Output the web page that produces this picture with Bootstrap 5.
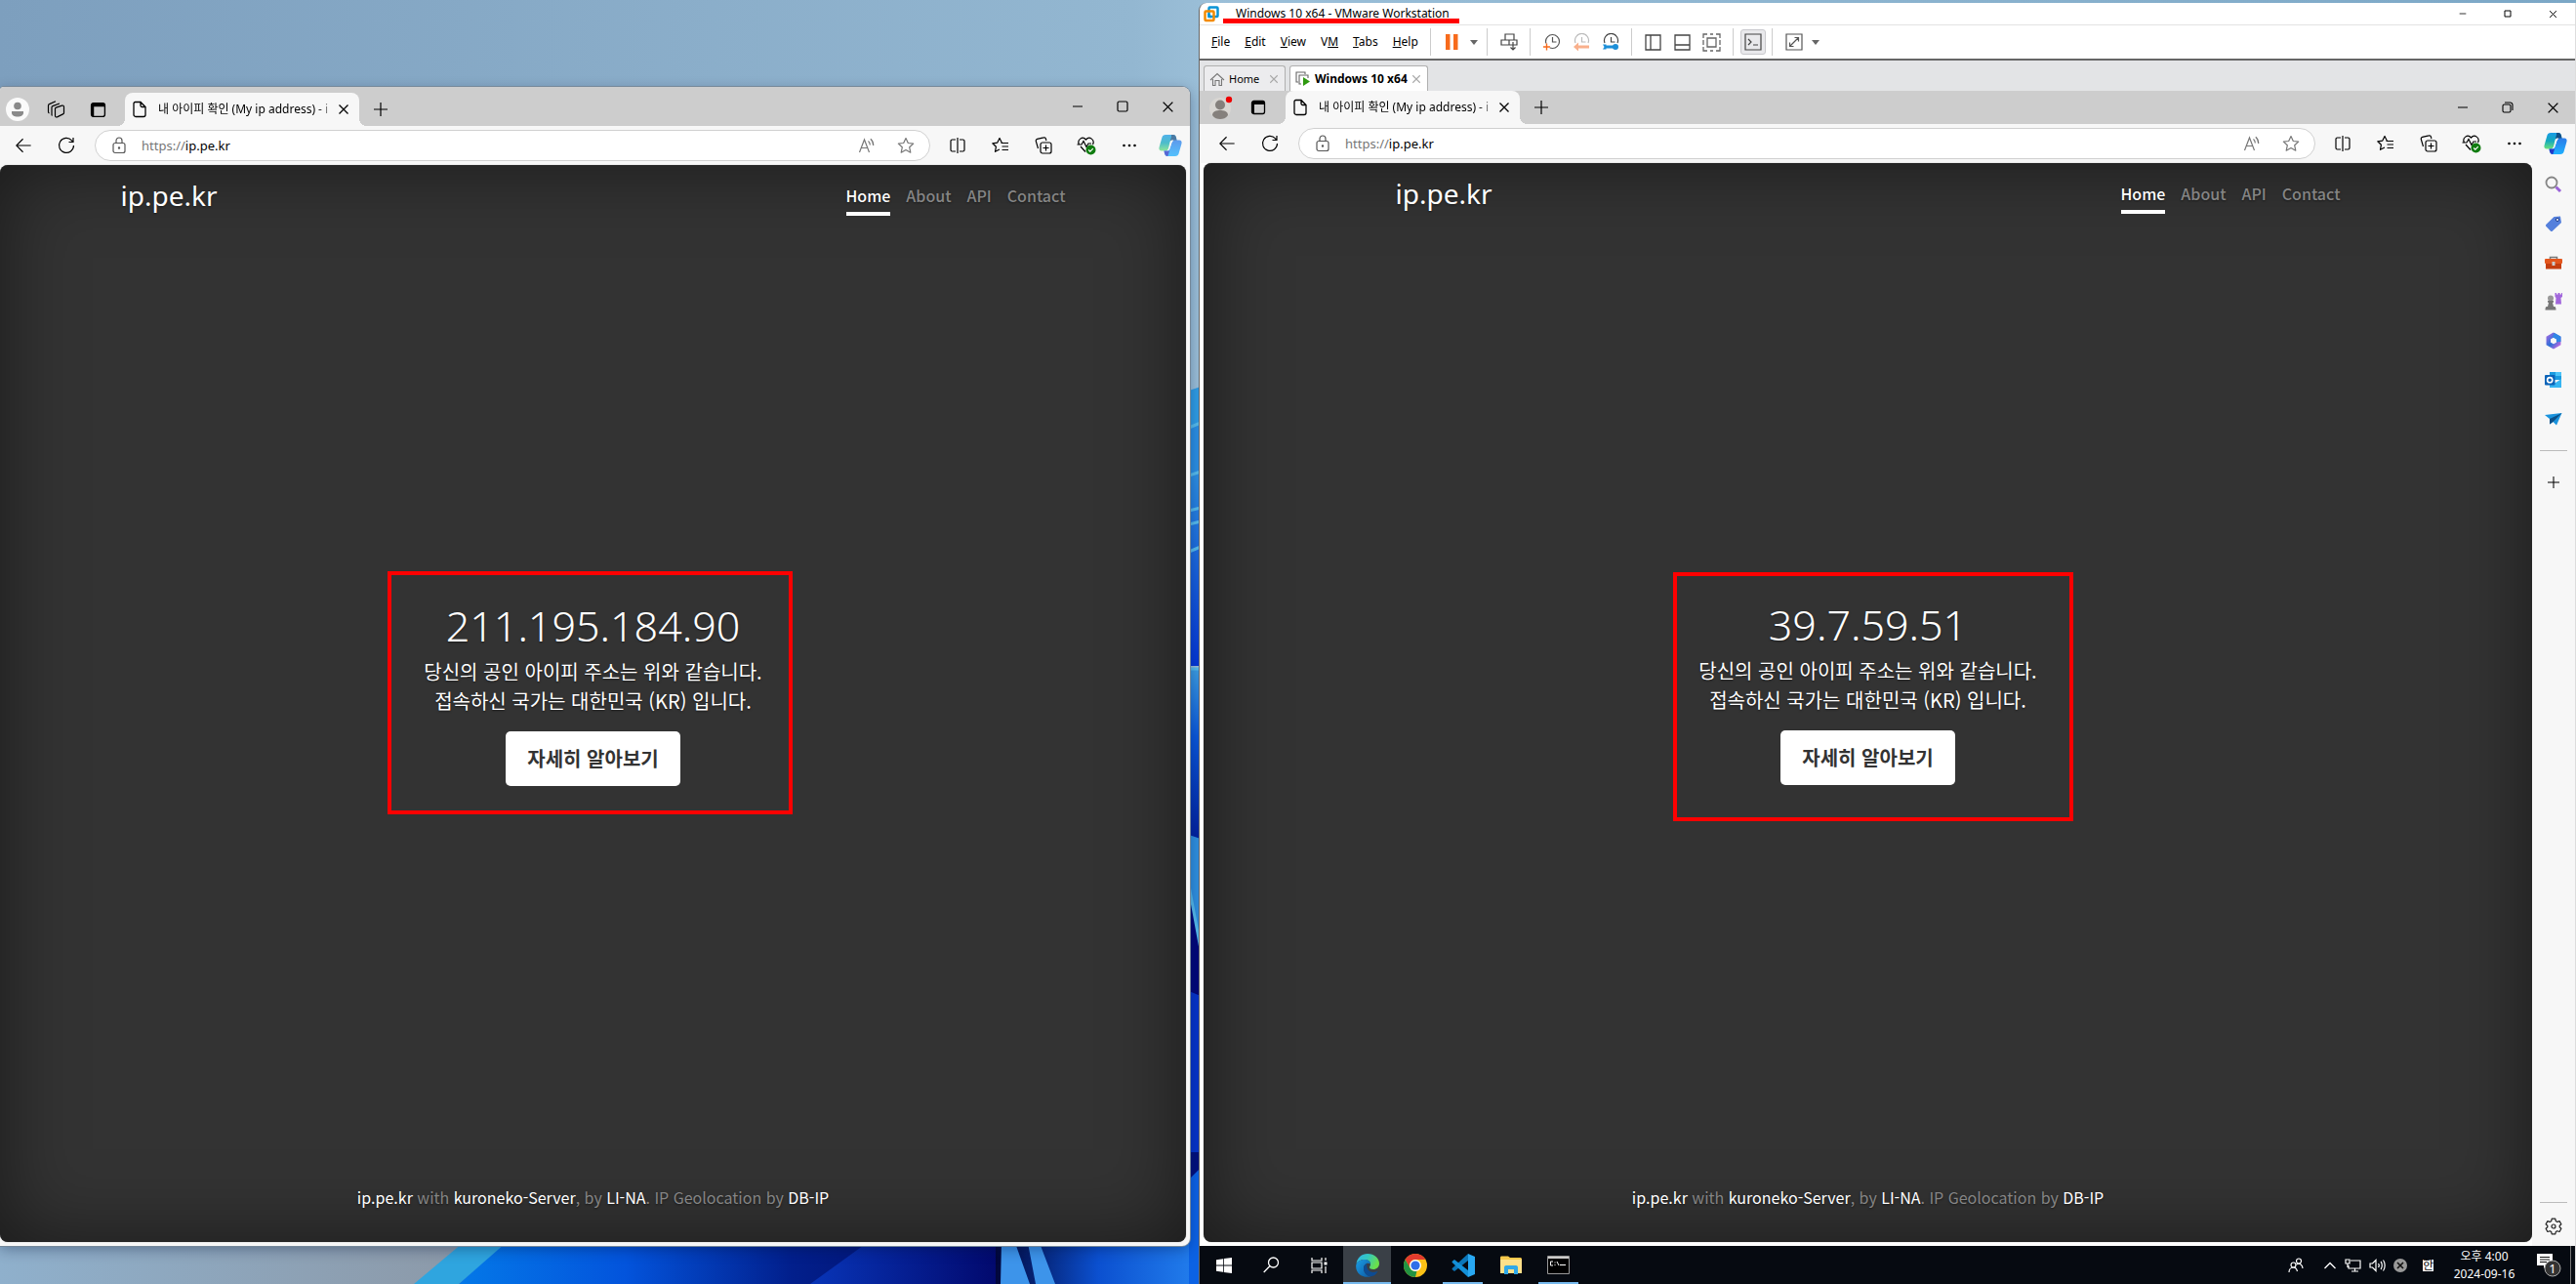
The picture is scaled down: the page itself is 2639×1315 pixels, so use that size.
<!DOCTYPE html>
<html lang="ko">
<head>
<meta charset="utf-8">
<meta name="viewport" content="width=device-width, initial-scale=1">
<title>Desktop</title>
<link href="https://cdn.jsdelivr.net/npm/bootstrap@5.3.0/dist/css/bootstrap.min.css" rel="stylesheet">
<style>
body{font-family:"Noto Sans","Noto Sans CJK KR",sans-serif;font-size:12px;line-height:16px;color:#000;background:#8fb0cb}
button{font:inherit;color:inherit;border:0;background:none;padding:0}
svg{display:block;flex:none}
.desk{height:100vh;min-height:600px;position:relative;overflow:hidden}
.wallpaper{position:absolute;inset:0;width:100%;height:100%}
.pane-left{flex:1219 1 0;min-width:0;padding-top:89px;padding-bottom:39px;position:relative}
.pane-right{flex:1411 1 0;min-width:0;margin-left:9px;padding-top:3px;position:relative}
.win{background:#f7f7f7;overflow:hidden}
.win-host{border-radius:4px 8px 8px 0;box-shadow:0 0 0 1px #76899a,0 4px 14px rgba(0,20,60,.35)}
.win-vm{background:#fff;border-left:1px solid #666;border-right:1px solid #ddd;border-top-left-radius:8px}
.strip{background:#cdcdcd;height:34px}
.strip-tall{height:40px}
.strip-tall .tabs{padding-top:6px}
.ib{display:flex;align-items:center;justify-content:center;width:44px;height:100%;flex:none}
.ib-36{width:36px}.ib-40{width:40px}.ib-46{width:46px}.ib-30{width:30px}.ib-32{width:32px}.ib-14{width:14px}
.page-tab{width:240px;height:34px;background:#f7f7f7;border-radius:8px 8px 0 0;position:relative;padding:0 10px 0 7px;margin-left:8px}
.page-tab::before,.page-tab::after{content:"";position:absolute;bottom:0;width:8px;height:8px}
.page-tab::before{left:-8px;background:radial-gradient(circle at 0 0,transparent 8px,#f7f7f7 8px)}
.page-tab::after{right:-8px;background:radial-gradient(circle at 100% 0,transparent 8px,#f7f7f7 8px)}
.page-tab-vm{margin-left:12px}
.tab-label{flex:1;white-space:nowrap;margin-left:11px;-webkit-mask-image:linear-gradient(90deg,#000 88%,transparent);mask-image:linear-gradient(90deg,#000 88%,transparent)}
.tools{height:40px;background:#f7f7f7;padding-left:2px}
.tools-vm{padding-left:6px}
.addr{height:32px;border:1px solid #d0d0d0;border-radius:16px;background:#fff;margin:0 6px 0 7px;padding:0 4px 0 14px;font-size:13px;color:#767676;min-width:0}
.addr input{border:0;padding:0;outline:0;flex:1;min-width:0;background:none;color:#000}
.addr label{margin-left:13px}
.dark{background:#333;color:#fff;border-radius:8px;box-shadow:0 0 1px #888;font-family:"Noto Sans CJK KR","Noto Sans",sans-serif;overflow:hidden;font-size:16px;line-height:24px;text-shadow:0 1px 2px rgba(0,0,0,.5)}
.dark-in{box-shadow:inset 0 0 80px rgba(0,0,0,.5)}
.cover{width:100%;max-width:1000px}
.brand{font-family:"Noto Sans",sans-serif;font-size:28px;line-height:30px}
.topnav a{color:#858585;font-weight:500;text-decoration:none;padding:3px 0 5px;border-bottom:4px solid transparent}
.topnav a.on{color:#fff;border-color:#fff}
.ip{font-family:"Noto Sans","Noto Sans CJK KR",sans-serif;font-weight:300;font-size:43px;line-height:52px;margin:0 0 6px}
.say{font-size:20px;line-height:30px;margin:0}
.more{display:inline-block;background:#fff;color:#333;font-weight:700;font-size:20px;line-height:30px;padding:13px 22px;border-radius:5px;text-decoration:none;text-shadow:none;margin-top:16px}
.redbox{position:absolute;border:4px solid #f00;pointer-events:none}
.redbox-a{inset:-30px -14px -29px -21px}
.redbox-b{inset:-28px -20px -37px -10px}
.hero{width:380px;position:relative}
.foot{color:#858585;padding-bottom:18px}
.foot a{color:#fff;text-decoration:none}
.vm-title{height:23px;border-bottom:1px solid #e3e3e3}
.vm-title .name{margin-left:17px;position:relative}
.redline{position:absolute;left:-13px;right:-10px;top:13px;height:5px;background:#f00}
.vm-menu{height:34px;padding-left:12px}
.vm-menu .words{gap:15px;margin-right:12px}
.vm-sep{width:1px;height:28px;background:#ccc;margin:0 7px 0 6px}
.words + .vm-sep{margin-left:0}
.pressed{width:26px;height:26px;background:#e9e9ec;border:1px solid #c9c9cd;border-radius:3px}
.vm-tabs{height:33px;background:#e3e4e6;border-top:2px solid #666;padding:5px 0 0 4px;gap:4px}
.vm-tab{height:27px;border:1px solid #b0b0b0;border-bottom:0;border-radius:3px 3px 0 0;background:#ececee;width:84px;padding:0 6px 0 5px;font-size:11px}
.vm-tab-on{width:142px;font-size:12px;background:#fff}
.x-dim{color:#a8a8a8}
.side{width:44px;background:#f7f7f7;padding-top:2px}
.side button{width:100%;height:40px;display:flex;align-items:center;justify-content:center}
.side hr{width:28px;margin:12px auto;border:0;height:1px;background:#bbb;opacity:1}
.taskbar{height:39px;background:#060a11;color:#fff}
.task{width:49px;height:39px;display:flex;align-items:center;justify-content:center;position:relative}
.task.open::after{content:"";position:absolute;left:4px;right:4px;bottom:0;height:2px;background:#76b9ed}
.task.now{background:#3a4047}
.task.now::after{left:0;right:0}
.clock{width:88px;text-align:center;line-height:18px;font-size:12px}
.showdesk{width:5px;height:39px;border-left:1px solid #777}
</style>
</head>
<body>
<svg width="0" height="0" class="position-absolute">
<defs>
<linearGradient id="cg1" x1="0" y1="0" x2="0" y2="1"><stop offset="0" stop-color="#1a9be6"/><stop offset=".5" stop-color="#14a9bd"/><stop offset="1" stop-color="#6be07c"/></linearGradient>
<linearGradient id="cg2" x1="0" y1="0" x2="0" y2="1"><stop offset="0" stop-color="#2a7be8"/><stop offset="1" stop-color="#1fb0ff"/></linearGradient>
<linearGradient id="eg1" x1="0" y1="0" x2="1" y2=".4"><stop offset="0" stop-color="#2fb4ef"/><stop offset=".5" stop-color="#34c8c0"/><stop offset="1" stop-color="#6be04a"/></linearGradient>
<linearGradient id="eg2" x1="0" y1="0" x2="1" y2="1"><stop offset="0" stop-color="#1b9de2"/><stop offset="1" stop-color="#0c59a4"/></linearGradient>
<linearGradient id="mg" x1="0" y1="0" x2="1" y2="1"><stop offset="0" stop-color="#8e6be0"/><stop offset=".5" stop-color="#2a6fd6"/><stop offset="1" stop-color="#b86ae0"/></linearGradient>
<symbol id="i-person" viewBox="0 0 24 24"><circle cx="12" cy="12" r="12" fill="#fafafa"/><circle cx="12" cy="8.500" r="3.800" fill="#8a8a8a"/><path d="M6 14h12v1.500c0 2.500-2.500 4-6 4s-6-1.500-6-4z" fill="#8a8a8a"/></symbol>
<symbol id="i-person2" viewBox="0 0 24 24"><circle cx="11" cy="13" r="11" fill="#d9d6d2"/><circle cx="11" cy="9.500" r="5" fill="#85807c"/><path d="M3 20c0-4 4-5 8-5s8 1 8 5c-2 3-5 4-8 4s-6-1-8-4z" fill="#85807c"/><circle cx="20" cy="4" r="3.200" fill="#e00"/></symbol>
<symbol id="i-spaces" viewBox="0 0 20 20" fill="none" stroke="#000" stroke-width="1.200" stroke-linejoin="round"><path d="M8.500 9.500a1.500 1.500 0 0 1 1-1.400l6-2a1.500 1.500 0 0 1 2 1.400v6a1.500 1.500 0 0 1-1 1.400l-6 3a1.500 1.500 0 0 1-2-1.400zM5.500 16.500a1.500 1.500 0 0 1-.500-1V8a1.500 1.500 0 0 1 1-1.400l7-2.600M2.500 14a1.500 1.500 0 0 1-1-1.400V6a1.500 1.500 0 0 1 1-1.400l6.500-2.800"/></symbol>
<symbol id="i-tabact" viewBox="0 0 16 16"><rect x="1.500" y="1.500" width="13" height="13" rx="2" fill="none" stroke="#000" stroke-width="1.300"/><path d="M1.500 5V3.500a2 2 0 0 1 2-2h9a2 2 0 0 1 2 2V5zM4 5v9.500H3a1.500 1.500 0 0 1-1.500-1.500V5z"/></symbol>
<symbol id="i-doc" viewBox="0 0 16 18" fill="none" stroke="#000" stroke-width="1.300"><path d="M3.500 1.500h5.500l5 5v8a2 2 0 0 1-2 2H4a2 2 0 0 1-2-2V3a1.500 1.500 0 0 1 1.500-1.500zM9 1.500V5a1.500 1.500 0 0 0 1.500 1.500H14"/></symbol>
<symbol id="i-x" viewBox="0 0 12 12" fill="none" stroke="currentColor" stroke-width="1.300"><path d="M1.500 1.500l9 9M10.500 1.500l-9 9"/></symbol>
<symbol id="i-plus" viewBox="0 0 14 14" fill="none" stroke="currentColor" stroke-width="1.200"><path d="M7 0v14M0 7h14"/></symbol>
<symbol id="i-min" viewBox="0 0 12 12" stroke="#000" stroke-width="1.200"><path d="M1 6h10"/></symbol>
<symbol id="i-max" viewBox="0 0 12 12" fill="none" stroke="#000" stroke-width="1.200"><rect x="1" y="1" width="10" height="10" rx="1.500"/></symbol>
<symbol id="i-rest" viewBox="0 0 12 12" fill="none" stroke="#000" stroke-width="1.100"><rect x="1" y="3" width="8" height="8" rx="1.500"/><path d="M3 1h5.500A2.500 2.500 0 0 1 11 3.500V9"/></symbol>
<symbol id="i-back" viewBox="0 0 20 20" fill="none" stroke="#000" stroke-width="1.200"><path d="M18.500 10H2M9.500 2.500 2 10l7.500 7.500"/></symbol>
<symbol id="i-reload" viewBox="0 0 20 20" fill="none" stroke="#000" stroke-width="1.200"><path d="M17.500 10a7.500 7.500 0 1 1-2-5.200L17 6.500M17 2v4.500h-4.500"/></symbol>
<symbol id="i-lock" viewBox="0 0 18 18" fill="none" stroke="#555" stroke-width="1.200"><rect x="3" y="6.500" width="12" height="10" rx="2"/><path d="M6 6.500V4a3 3 0 0 1 6 0v2.500"/><circle cx="9" cy="11.500" r=".6" fill="#555"/></symbol>
<symbol id="i-read" viewBox="0 0 18 18" fill="none" stroke="#777" stroke-width="1.200"><path d="M1.500 16 6.500 3l5 13M3.200 11.500h6.600M10.500 4.500c1.200 1 1.800 2.300 1.800 4M12.800 2.300c2 1.700 2.900 3.900 2.900 6.700"/></symbol>
<symbol id="i-star" viewBox="0 0 18 18" fill="none" stroke="#777" stroke-width="1.200"><path d="M9 1.500l2.300 5 5.400.600-4 3.700 1.100 5.400L9 13.500l-4.800 2.700 1.100-5.400-4-3.700 5.400-.600z" stroke-linejoin="round"/></symbol>
<symbol id="i-split" viewBox="0 0 18 18" fill="none" stroke="#000" stroke-width="1.200"><path d="M9 1v16M7 3H3.500A1.500 1.500 0 0 0 2 4.500v9A1.500 1.500 0 0 0 3.500 15H7M11 3h3.500A1.500 1.500 0 0 1 16 4.500v9a1.500 1.500 0 0 1-1.500 1.500H11"/></symbol>
<symbol id="i-favs" viewBox="0 0 18 18" fill="none" stroke="#000" stroke-width="1.200"><path d="M10.500 6.500 8 1.500l-2.200 4.600-5 .700 3.600 3.500-.900 5L8 13M9.500 6.500H17M10.500 10H17M10.500 13.500H17" stroke-linejoin="round"/></symbol>
<symbol id="i-coll" viewBox="0 0 18 18" fill="none" stroke="#000" stroke-width="1.200"><rect x="6" y="6" width="11" height="11" rx="2"/><path d="M11.500 8.500v6M8.500 11.500h6M3.500 12 1.300 4.600a1.800 1.800 0 0 1 1.300-2.200L9.200.900a1.800 1.800 0 0 1 2.200 1.300l.500 1.800"/></symbol>
<symbol id="i-heart" viewBox="0 0 20 20" fill="none" stroke="#000" stroke-width="1.200"><path d="M2.500 9C0 4 6 0 9.500 4 13 0 19 4 16.500 9M4 11l5 5.500M.500 9H5l2-3.500 3 6L12 8h3"/><circle cx="14.500" cy="14.500" r="5" fill="#107c10" stroke="none"/><path d="M12.200 14.500l1.600 1.600 3-3" stroke="#fff"/></symbol>
<symbol id="i-dots" viewBox="0 0 16 16"><circle cx="2.500" cy="8" r="1.300"/><circle cx="8" cy="8" r="1.300"/><circle cx="13.500" cy="8" r="1.300"/></symbol>
<symbol id="i-copilot" viewBox="0 0 24 22"><path d="M7 0h8c1.500 0 2.500 1 3 3l.500 3h-3.500c-1.500 0-2 1-2.500 2.500L10.500 14c-1 2-2 2.500-4 2.500H3c-2 0-3-1.500-2.500-3.500L3.500 2.500C4 1 5 0 7 0z" fill="url(#cg1)"/><path d="M13 0h2c1.500 0 2.500 1 3 3l.500 3H12l1-4c.100-1 0-2 0-2z" fill="#124f86"/><path d="M17 22H9c-1.500 0-2.500-1-3-3l-.500-2.500H8c2 0 3-1 3.500-3L13.500 8c1-2 2-2.500 4-2.500H21c2 0 3 1.500 2.500 3.500l-3 10.500C20 21 19 22 17 22z" fill="url(#cg2)"/><path d="M9 22c-1.500 0-2.500-1-3-3l-.500-2.500H11L10 20c-.300 1-.500 2-1 2z" fill="#2338c8"/><path d="M11.500 7.500c.500-1.500 1.500-2 3-2h1c-1.500.800-2 2-2.500 3.500l-1.500 5c-.500 1.500-1.500 2.500-3 2.500 1-.800 1.400-2 1.800-3.500z" fill="#f7f7f7"/></symbol>
<symbol id="i-caret" viewBox="0 0 8 5"><path d="M0 0h8L4 5z" fill="#666"/></symbol>
</defs>
</svg>

<div class="desk d-flex">
<svg class="wallpaper" viewBox="0 0 2639 1315" preserveAspectRatio="none" aria-hidden="true">
<defs>
<linearGradient id="sky" x1="0" y1="0" x2="1" y2="0"><stop offset="0" stop-color="#7d9fbe"/><stop offset=".44" stop-color="#93b7d1"/><stop offset=".47" stop-color="#9bbfd8"/><stop offset="1" stop-color="#7ba7c6"/></linearGradient>
<linearGradient id="haze" x1="0" y1="0" x2="1" y2="0"><stop offset="0" stop-color="#8fb0cc"/><stop offset="1" stop-color="#8c99a8"/></linearGradient>
<linearGradient id="deep" x1="0" y1="0" x2="1" y2="0"><stop offset="0" stop-color="#0478e8"/><stop offset=".3" stop-color="#0354dc"/><stop offset=".6" stop-color="#021f8c"/><stop offset="1" stop-color="#02065a"/></linearGradient>
<linearGradient id="fold" x1="0" y1="0" x2="1" y2="0"><stop offset="0" stop-color="#0835b8"/><stop offset="1" stop-color="#02076a"/></linearGradient>
<linearGradient id="s1" x1="0" y1="0" x2="0" y2="1"><stop offset="0" stop-color="#2d8fe0"/><stop offset="1" stop-color="#0436d4"/></linearGradient>
<linearGradient id="s2" x1="0" y1="0" x2="0" y2="1"><stop offset="0" stop-color="#3b9be0"/><stop offset=".4" stop-color="#0a56d8"/><stop offset="1" stop-color="#02209c"/></linearGradient>
<linearGradient id="end" x1="0" y1="0" x2="1" y2="0"><stop offset="0" stop-color="#02063a"/><stop offset=".5" stop-color="#0b50d0"/><stop offset="1" stop-color="#2380ee"/></linearGradient>
</defs>
<rect width="2639" height="1315" fill="url(#sky)"/>
<rect y="1270" width="480" height="45" fill="url(#haze)"/>
<path d="M474 1273h46l-50 42h-46z" fill="#2fa5df"/>
<path d="M518 1273h520v42H470z" fill="url(#deep)"/>
<path d="M888 1273h142v42H830z" fill="url(#fold)"/>
<path d="M1020 1273h210v42h-210z" fill="url(#end)"/>
<path d="M1026 1273h14l15 42h-30zM1053 1273h12l16 42h-20z" fill="#3d94ea"/>
<g>
<path d="M1218 400l12-4v90h-12z" fill="#2f9be2"/><path d="M1218 437l12-5v55l-12 3z" fill="#2a8de0"/>
<path d="M1218 486l12-4v200h-12z" fill="url(#s1)"/>
<path d="M1218 685h12v175h-12z" fill="url(#s2)"/>
<path d="M1218 855l12 4v115l-12-65z" fill="#2f8edd"/>
<path d="M1218 909l12 65v45h-12z" fill="#020878"/>
<path d="M1218 1015l12 5v165h-12z" fill="#0634c8"/>
<path d="M1218 1180h12v18l-12 12z" fill="#02107c"/>
<path d="M1218 1208l12-12v119h-12z" fill="#0c62e4"/>
<path d="M1218 438l12-5M1218 487l12-4M1218 523l12-3M1218 537l12-3M1218 565l12-5M1218 685h12M1218 907l12 65" stroke="#55b9ea" stroke-width="3"/>
</g>
</svg>

<div class="pane-left d-flex flex-column">
<section class="win win-host flex-grow-1 d-flex flex-column" aria-label="Edge">
  <div class="strip strip-tall d-flex justify-content-between">
    <div class="tabs d-flex align-items-center">
      <button class="ib ib-36" aria-label="Profile"><svg width="24" height="24"><use href="#i-person"/></svg></button>
      <button class="ib" aria-label="Workspaces"><svg width="20" height="20"><use href="#i-spaces"/></svg></button>
      <button class="ib ib-40" aria-label="Tab actions"><svg width="17" height="17"><use href="#i-tabact"/></svg></button>
      <div class="page-tab d-flex align-items-center"><svg width="16" height="18"><use href="#i-doc"/></svg><span class="tab-label">내 아이피 확인 (My ip address) - i</span><button aria-label="Close tab"><svg width="12" height="12"><use href="#i-x"/></svg></button></div>
      <button class="ib" aria-label="New tab"><svg width="14" height="14"><use href="#i-plus"/></svg></button>
    </div>
    <div class="d-flex">
      <button class="ib ib-46" aria-label="Minimize"><svg width="12" height="12"><use href="#i-min"/></svg></button>
      <button class="ib ib-46" aria-label="Maximize"><svg width="12" height="12"><use href="#i-max"/></svg></button>
      <button class="ib ib-46" aria-label="Close"><svg width="13" height="13"><use href="#i-x"/></svg></button>
    </div>
  </div>
  <div class="tools d-flex align-items-center">
    <button class="ib" aria-label="Back"><svg width="18" height="18"><use href="#i-back"/></svg></button>
    <button class="ib" aria-label="Reload"><svg width="20" height="20"><use href="#i-reload"/></svg></button>
    <div class="addr d-flex align-items-center flex-grow-1">
      <svg width="20" height="18"><use href="#i-lock"/></svg><label for="url-a">https://</label><input id="url-a" value="ip.pe.kr">
      <button class="ib ib-40" aria-label="Read aloud"><svg width="18" height="18"><use href="#i-read"/></svg></button>
      <button class="ib ib-40" aria-label="Favorite"><svg width="18" height="18"><use href="#i-star"/></svg></button>
    </div>
    <button class="ib" aria-label="Split screen"><svg width="18" height="18"><use href="#i-split"/></svg></button>
    <button class="ib" aria-label="Favorites"><svg width="18" height="18"><use href="#i-favs"/></svg></button>
    <button class="ib" aria-label="Collections"><svg width="18" height="18"><use href="#i-coll"/></svg></button>
    <button class="ib" aria-label="Essentials"><svg width="20" height="20"><use href="#i-heart"/></svg></button>
    <button class="ib" aria-label="More"><svg width="16" height="16"><use href="#i-dots"/></svg></button>
    <button class="ib ib-40" aria-label="Copilot"><svg width="24" height="24" class="opacity-75"><use href="#i-copilot"/></svg></button>
  </div>
  <div class="dark flex-grow-1 d-flex me-1 mb-1">
    <div class="dark-in flex-grow-1 d-flex justify-content-center">
      <div class="cover d-flex flex-column align-items-center p-3 pb-0">
        <header class="w-100 mb-auto d-flex justify-content-between align-items-start">
          <h3 class="brand fw-normal m-0">ip.pe.kr</h3>
          <nav class="topnav d-flex gap-3"><a class="on" href="#">Home</a><a href="#">About</a><a href="#">API</a><a href="#">Contact</a></nav>
        </header>
        <main class="hero text-center mb-3">
          <h1 class="ip">211.195.184.90</h1>
          <p class="say">당신의 공인 아이피 주소는 위와 같습니다.<br>접속하신 국가는 대한민국 (KR) 입니다.</p>
          <a class="more" href="#">자세히 알아보기</a>
          <div class="redbox redbox-a"></div>
        </main>
        <footer class="foot mt-auto mb-3"><a href="#">ip.pe.kr</a> with <a href="#">kuroneko-Server</a>, by <a href="#">LI-NA</a>. IP Geolocation by <a href="#">DB-IP</a></footer>
      </div>
    </div>
  </div>
</section>
</div>

<div class="pane-right d-flex flex-column">
<section class="win win-vm flex-grow-1 d-flex flex-column" aria-label="VMware Workstation">
  <div class="vm-title d-flex align-items-center justify-content-between">
    <div class="d-flex align-items-center ps-1">
      <svg width="16" height="17" viewBox="0 0 16 17" fill="none" stroke-width="2.500"><rect x="5.500" y="1.500" width="9" height="9.500" rx="1" stroke="#0a94d6"/><rect x="1.500" y="5.500" width="9" height="9.500" rx="1" stroke="#f38b00"/><path d="M5.500 8v3H8" stroke="#0a94d6"/></svg>
      <span class="name">Windows 10 x64 - VMware Workstation<span class="redline"></span></span>
    </div>
    <div class="d-flex h-100">
      <button class="ib ib-46" aria-label="Minimize"><svg width="8" height="8"><use href="#i-min"/></svg></button>
      <button class="ib ib-46" aria-label="Maximize"><svg width="8" height="8" viewBox="0 0 8 8"><path d="M1 1h6v6H1z" fill="none" stroke="#000"/></svg></button>
      <button class="ib ib-46" aria-label="Close"><svg width="9" height="9"><use href="#i-x"/></svg></button>
    </div>
  </div>
  <div class="vm-menu d-flex align-items-center">
    <div class="words d-flex">
      <button><u>F</u>ile</button><button><u>E</u>dit</button><button><u>V</u>iew</button><button>V<u>M</u></button><button><u>T</u>abs</button><button><u>H</u>elp</button>
    </div>
    <span class="vm-sep"></span>
    <button class="ib ib-30" aria-label="Pause"><svg width="13" height="16" viewBox="0 0 13 16" fill="#f76b1c"><path d="M0 0h4.500v16H0zM8 0h4.500v16H8z"/></svg></button>
    <button class="ib ib-14" aria-label="Power menu"><svg width="8" height="5"><use href="#i-caret"/></svg></button>
    <span class="vm-sep"></span>
    <button class="ib ib-30" aria-label="Send keys"><svg width="18" height="18" viewBox="0 0 18 18" fill="none" stroke="#444" stroke-width="1.200"><path d="M5 1h9v6H5zM1 7h16v5H1zM9 7v5M13 9v8M10.500 14.500 13 17l2.500-2.500"/></svg></button>
    <span class="vm-sep"></span>
    <button class="ib ib-30" aria-label="Take snapshot"><svg width="18" height="18" viewBox="0 0 18 18" fill="none" stroke="#555" stroke-width="1.200"><circle cx="9.500" cy="8.500" r="7"/><path d="M9.500 4v5h4"/><path d="M0 14h7M3.500 10.500v7" stroke="#fff" stroke-width="3"/><path d="M0 14h7M3.500 10.500v7" stroke="#f76b1c" stroke-width="1.400"/></svg></button>
    <button class="ib ib-30" aria-label="Revert snapshot"><svg width="18" height="18" viewBox="0 0 18 18" fill="none" stroke="#bbb" stroke-width="1.200"><path d="M3 10a7 7 0 1 1 13 0M9.500 4v5h4"/><path d="M17 14H5" stroke="#f9b08c" stroke-width="3"/><path d="M6 9.500v9L1 14z" fill="#f9b08c" stroke="none"/></svg></button>
    <button class="ib ib-30" aria-label="Manage snapshots"><svg width="18" height="18" viewBox="0 0 18 18" fill="none" stroke="#444" stroke-width="1.200"><path d="M3 10a7 7 0 1 1 13 0M9.500 4v5h4"/><path d="M4 14h12" stroke="#1d8fd8" stroke-width="3"/><circle cx="14" cy="14" r="3" fill="#1d8fd8" stroke="none"/><path d="M1 11.500h3.500v5H1l1.500-2.500z" fill="#1d8fd8" stroke="none"/></svg></button>
    <span class="vm-sep"></span>
    <button class="ib ib-30" aria-label="Library"><svg width="17" height="17" viewBox="0 0 17 17" fill="none" stroke="#444" stroke-width="1.300"><path d="M1 1h15v15H1zM6 1v15"/></svg></button>
    <button class="ib ib-30" aria-label="Thumbnails"><svg width="17" height="17" viewBox="0 0 17 17" fill="none" stroke="#444" stroke-width="1.300"><path d="M1 1h15v15H1zM1 11h15"/></svg></button>
    <button class="ib ib-30" aria-label="Stretch"><svg width="19" height="19" viewBox="0 0 19 19" fill="none" stroke="#666" stroke-width="1.300"><path d="M5 5h9v9H5zM1 5V1h4M14 1h4v4M18 14v4h-4M5 18H1v-4M1 7v5M18 7v5M8 1h3M8 18h3"/></svg></button>
    <span class="vm-sep"></span>
    <button class="ib pressed" aria-label="Console"><svg width="18" height="18" viewBox="0 0 18 18" fill="none" stroke="#444" stroke-width="1.200"><path d="M1 1h16v16H1zM4 6l3 3-3 3M9 12h5"/></svg></button>
    <span class="vm-sep"></span>
    <button class="ib ib-30" aria-label="Full screen"><svg width="18" height="18" viewBox="0 0 18 18" fill="none" stroke="#555" stroke-width="1.200"><path d="M1 1h16v16H1zM5 13l8-8M9.500 4.500h4v4M4.500 9.500v4h4"/></svg></button>
    <button class="ib ib-14" aria-label="View menu"><svg width="8" height="5"><use href="#i-caret"/></svg></button>
  </div>
  <div class="vm-tabs d-flex">
    <div class="vm-tab d-flex align-items-center"><svg width="16" height="14" viewBox="0 0 16 14" fill="none" stroke="#777" stroke-width="1.100"><path d="M1 8l7-6.500L15 8M3.500 7v6.500H6v-5h4v5h2.500V7"/></svg><span class="ms-1 me-auto">Home</span><button class="x-dim" aria-label="Close Home"><svg width="10" height="10"><use href="#i-x"/></svg></button></div>
    <div class="vm-tab vm-tab-on d-flex align-items-center"><svg width="16" height="16" viewBox="0 0 16 16" fill="none" stroke="#666" stroke-width="1.100"><path d="M3 11H1V1h9v2M6 13H4V4h9v3"/><path d="M8 6l7 4.500L8 15z" fill="#2f9a10" stroke="none"/></svg><b class="ms-1 me-auto">Windows 10 x64</b><button class="x-dim" aria-label="Close Windows 10 x64"><svg width="10" height="10"><use href="#i-x"/></svg></button></div>
  </div>
  <div class="strip d-flex justify-content-between">
    <div class="tabs d-flex align-items-center">
      <button class="ib" aria-label="Profile"><svg width="24" height="24"><use href="#i-person2"/></svg></button>
      <button class="ib ib-32" aria-label="Tab actions"><svg width="16" height="16"><use href="#i-tabact"/></svg></button>
      <div class="page-tab page-tab-vm d-flex align-items-center"><svg width="16" height="18"><use href="#i-doc"/></svg><span class="tab-label">내 아이피 확인 (My ip address) - i</span><button aria-label="Close tab"><svg width="12" height="12"><use href="#i-x"/></svg></button></div>
      <button class="ib" aria-label="New tab"><svg width="14" height="14"><use href="#i-plus"/></svg></button>
    </div>
    <div class="d-flex">
      <button class="ib ib-46" aria-label="Minimize"><svg width="12" height="12"><use href="#i-min"/></svg></button>
      <button class="ib ib-46" aria-label="Restore"><svg width="12" height="12"><use href="#i-rest"/></svg></button>
      <button class="ib ib-46" aria-label="Close"><svg width="13" height="13"><use href="#i-x"/></svg></button>
    </div>
  </div>
  <div class="tools tools-vm d-flex align-items-center">
    <button class="ib" aria-label="Back"><svg width="18" height="18"><use href="#i-back"/></svg></button>
    <button class="ib" aria-label="Reload"><svg width="20" height="20"><use href="#i-reload"/></svg></button>
    <div class="addr d-flex align-items-center flex-grow-1">
      <svg width="20" height="18"><use href="#i-lock"/></svg><label for="url-b">https://</label><input id="url-b" value="ip.pe.kr">
      <button class="ib ib-40" aria-label="Read aloud"><svg width="18" height="18"><use href="#i-read"/></svg></button>
      <button class="ib ib-40" aria-label="Favorite"><svg width="18" height="18"><use href="#i-star"/></svg></button>
    </div>
    <button class="ib" aria-label="Split screen"><svg width="18" height="18"><use href="#i-split"/></svg></button>
    <button class="ib" aria-label="Favorites"><svg width="18" height="18"><use href="#i-favs"/></svg></button>
    <button class="ib" aria-label="Collections"><svg width="18" height="18"><use href="#i-coll"/></svg></button>
    <button class="ib" aria-label="Essentials"><svg width="20" height="20"><use href="#i-heart"/></svg></button>
    <button class="ib" aria-label="More"><svg width="16" height="16"><use href="#i-dots"/></svg></button>
    <button class="ib ib-40" aria-label="Copilot"><svg width="24" height="24"><use href="#i-copilot"/></svg></button>
  </div>
  <div class="flex-grow-1 d-flex ps-1">
    <div class="dark flex-grow-1 d-flex mb-1">
      <div class="dark-in flex-grow-1 d-flex justify-content-center">
        <div class="cover d-flex flex-column align-items-center p-3 pb-0">
          <header class="w-100 mb-auto d-flex justify-content-between align-items-start">
            <h3 class="brand fw-normal m-0">ip.pe.kr</h3>
            <nav class="topnav d-flex gap-3"><a class="on" href="#">Home</a><a href="#">About</a><a href="#">API</a><a href="#">Contact</a></nav>
          </header>
          <main class="hero text-center mb-3">
            <h1 class="ip">39.7.59.51</h1>
            <p class="say">당신의 공인 아이피 주소는 위와 같습니다.<br>접속하신 국가는 대한민국 (KR) 입니다.</p>
            <a class="more" href="#">자세히 알아보기</a>
            <div class="redbox redbox-b"></div>
          </main>
          <footer class="foot mt-auto mb-3"><a href="#">ip.pe.kr</a> with <a href="#">kuroneko-Server</a>, by <a href="#">LI-NA</a>. IP Geolocation by <a href="#">DB-IP</a></footer>
        </div>
      </div>
    </div>
    <aside class="side d-flex flex-column" aria-label="Sidebar">
      <button aria-label="Search"><svg width="18" height="18" viewBox="0 0 18 18" fill="none"><circle cx="7" cy="7" r="5.500" stroke="#858585" stroke-width="1.800"/><path d="M11.500 11.500 16 16" stroke="#9a62d8" stroke-width="3"/></svg></button>
      <button aria-label="Shopping"><svg width="18" height="18" viewBox="0 0 18 18"><path d="M9.500 2 16 1.500 17 8 8 16.500c-.700.700-1.500.700-2.200 0L1.500 12c-.700-.700-.700-1.500 0-2.200z" fill="#5580dc"/><circle cx="13" cy="5" r="1.600" fill="#dbe6ff" stroke="#24408c"/></svg></button>
      <button aria-label="Tools"><svg width="18" height="18" viewBox="0 0 18 18"><path d="M5.500 6V3.500h7V6" fill="none" stroke="#777" stroke-width="1.500"/><rect y="5" width="18" height="5" rx="1" fill="#e3561d"/><path d="M1 10h16v5.500H1z" fill="#c43e10"/><rect x="7.500" y="8" width="3" height="4" fill="#ccc"/></svg></button>
      <button aria-label="Games"><svg width="18" height="18" viewBox="0 0 18 18"><path d="M10.500 0h1.500v1.500h1.500V0h2v1.500H17V0h1v4l-1.500 1 .500 6.500h-6L11.500 5l-1-1z" fill="#a267dc"/><circle cx="6" cy="5.500" r="3" fill="#999"/><path d="M3 8h6v1.500L8 10l1 4h1.500c.800 1 1 2 1 3.500H.500c0-1.500.200-2.500 1-3.500H3l1-4-1-.5z" fill="#777"/></svg></button>
      <button aria-label="Microsoft 365"><svg width="18" height="18" viewBox="0 0 18 18" fill="none" stroke-width="4.500"><path d="M9 3 3.800 6v6L9 15l5.200-3V6z" stroke="url(#mg)"/><path d="M9 3l5.200 3v4" stroke="#2f86e6"/></svg></button>
      <button aria-label="Outlook"><svg width="18" height="18" viewBox="0 0 18 18"><path d="M5 1h12v8H5z" fill="#1a9be0"/><path d="M5 9l6 3 6-4v9H5z" fill="#35b5f2"/><path d="M11 1h6v4h-6z" fill="#4ac3f8"/><rect y="4" width="10.500" height="10.500" rx="1" fill="#0c64b8"/><circle cx="5.200" cy="9.200" r="2.600" fill="none" stroke="#fff" stroke-width="1.600"/></svg></button>
      <button aria-label="Drop"><svg width="18" height="18" viewBox="0 0 18 18"><path d="M0 5 17.500 3 12 15.500 8.500 12 5 14.500V9z" fill="#1a93dd"/><path d="M5 9l12.500-6-9 9L5 14.500z" fill="#0b4f88"/></svg></button>
      <hr>
      <button aria-label="Add"><svg width="12" height="12"><use href="#i-plus"/></svg></button>
      <hr class="mt-auto mb-1">
      <button aria-label="Settings"><svg width="18" height="18" viewBox="0 0 18 18" fill="none" stroke="#222" stroke-width="1.200"><path d="M7.200 1.200h3.600l.500 2.300 1.500.900 2.300-.800 1.800 3.200-1.700 1.500v1.500l1.700 1.500-1.800 3.200-2.300-.800-1.500.900-.500 2.300H7.200l-.500-2.300-1.500-.900-2.300.800-1.800-3.200 1.700-1.500V8.300L1.100 6.800l1.800-3.200 2.300.800 1.500-.900z" stroke-linejoin="round"/><circle cx="9" cy="9" r="2"/></svg></button>
    </aside>
  </div>
  <div class="taskbar d-flex align-items-center justify-content-between">
    <div class="d-flex">
      <button class="task" aria-label="Start"><svg width="16" height="16" viewBox="0 0 16 16" fill="#fff"><path d="M0 2.200 7 1.200v6.400H0zM7.800 1.100 16 0v7.600H7.800zM0 8.400h7v6.400l-7-1zM7.800 8.400H16V16l-8.200-1.100z"/></svg></button>
      <button class="task" aria-label="Search"><svg width="17" height="17" viewBox="0 0 17 17" fill="none" stroke="#fff" stroke-width="1.300"><circle cx="10.500" cy="6" r="5"/><path d="M7 9.500.700 16"/></svg></button>
      <button class="task" aria-label="Task view"><svg width="17" height="16" viewBox="0 0 17 16" fill="none" stroke="#fff" stroke-width="1.200"><path d="M1 5h10v6H1zM1 0v3h10V0M1 16v-3h10v3M15 0v3M15 9v7"/><path d="M13.500 4.500h3v3h-3z" fill="#fff" stroke="none"/></svg></button>
      <button class="task now open" aria-label="Edge"><svg width="24" height="24" viewBox="0 0 24 24"><path d="M.500 10C1.500 4 6 0 12 0c7 0 12 4.800 12 10 0 3.800-3 6-6 6-2.500 0-4-1-4-2s1-1.500 1-3.500C15 8 12.500 6 9 6 5 6 1.800 8 .500 10z" fill="url(#eg1)"/><path d="M.200 12C.500 8.500 4.500 6 9 6c3.500 0 6 2 6 4.500-4-2-7 1-7 4.500 0 4.500 3.500 8 7.500 8.300C8 25.500-.500 21 .200 12z" fill="url(#eg2)"/><path d="M8 15c0-2.500 1.500-4.500 3.500-5-1.500 5 2 9 6.500 9 2 0 3.500-.800 4.500-1-1.500 3-4 5-7 5.300C11.500 23 8 19.500 8 15z" fill="#0d4b92"/></svg></button>
      <button class="task" aria-label="Chrome"><svg width="24" height="24" viewBox="0 0 24 24"><circle cx="12" cy="12" r="12" fill="#fbc116"/><path d="M12 0a12 12 0 0 1 10.400 6H12a6 6 0 0 0-5.200 9L1.600 6A12 12 0 0 1 12 0z" fill="#e33b2e"/><path d="M1.600 6 6.800 15A6 6 0 0 0 13.500 17.800L12 24A12 12 0 0 1 1.600 6z" fill="#229342"/><circle cx="12" cy="12" r="6" fill="#fff"/><circle cx="12" cy="12" r="4.600" fill="#2f6fe8"/></svg></button>
      <button class="task open" aria-label="Visual Studio Code"><svg width="24" height="24" viewBox="0 0 24 24"><path d="M17 0l7 3v18l-7 3z" fill="#28a8f2"/><path d="M17 0v7L3 18l-2.500-2 .200-1z" fill="#0b76b8"/><path d="M17 24v-7L3 6 .500 8l.200 1z" fill="#1390d8"/></svg></button>
      <button class="task" aria-label="File Explorer"><svg width="22" height="19" viewBox="0 0 22 19"><path d="M0 2c0-1 .500-1.500 1.500-1.500H8L10 2h11l1 1v15H0z" fill="#f6c94c"/><path d="M0 4h22v14H0z" fill="#fde08a"/><path d="M4 19v-7c0-1 .500-2 2-2h10c1.500 0 2 1 2 2v7h-4v-5H8v5z" fill="#2fa8e8"/></svg></button>
      <button class="task open" aria-label="Command Prompt"><svg width="23" height="19" viewBox="0 0 23 19"><path d="M.500.500h22v18H.500z" fill="#000" stroke="#999"/><path d="M1 1h21v2H1z" fill="#ccc"/><path d="M6 6H3.500v4H6M8 6.500v1M8 9v1M10 6l2 4M13 9.500h6" stroke="#fff" fill="none"/></svg></button>
    </div>
    <div class="d-flex align-items-center">
      <button class="ib ib-40" aria-label="People"><svg width="16" height="16" viewBox="0 0 16 16" fill="none" stroke="#fff" stroke-width="1.200"><circle cx="5.500" cy="7.500" r="2.500"/><circle cx="11" cy="3.500" r="2.500"/><path d="M1 15c0-3 2-5 4.500-5S9 12 9.500 14M8.500 7c3.500-2 6.500.500 6.500 4"/></svg></button>
      <button class="ib ib-30" aria-label="Hidden icons"><svg width="12" height="8" viewBox="0 0 12 8" fill="none" stroke="#fff" stroke-width="1.300"><path d="M.500 7 6 1.500 11.500 7"/></svg></button>
      <svg class="me-2" width="17" height="14" viewBox="0 0 17 14" fill="none" stroke="#fff" stroke-width="1.200"><path d="M6 2h10v8H4V7M7 13h7M10.500 10v3M1 1h4v4H1zM3 5v4"/></svg>
      <svg class="me-2" width="17" height="14" viewBox="0 0 17 14" fill="none" stroke="#fff" stroke-width="1.200"><path d="M1 5h2.500L7 1.500v11L3.500 9H1zM9.500 5c.800 1 .800 3 0 4M12 3c1.700 2 1.700 6 0 8M14.500 1.500c2.200 3 2.200 8 0 11"/></svg>
      <svg class="me-3" width="14" height="14" viewBox="0 0 14 14"><circle cx="7" cy="7" r="7" fill="#999"/><path d="M4 4l6 6M10 4l-6 6" stroke="#111" stroke-width="1.600"/></svg>
      <span class="bg-white text-black lh-1">한</span>
      <div class="clock ms-2">오후 4:00<br>2024-09-16</div>
      <button class="ib" aria-label="Notifications"><svg width="26" height="25" viewBox="0 0 26 25"><path d="M1 1h16v12H11l-3 3v-3H1z" fill="#fff"/><path d="M4 4.500h10M4 7h10M4 9.500h7" stroke="#111"/><circle cx="17" cy="16" r="8" fill="#333" stroke="#aaa"/><text x="17" y="21" fill="#fff" font-size="13" text-anchor="middle">1</text></svg></button>
      <span class="showdesk"></span>
    </div>
  </div>
</section>
</div>
</div>
<script src="https://cdn.jsdelivr.net/npm/bootstrap@5.3.0/dist/js/bootstrap.bundle.min.js"></script>
</body>
</html>
